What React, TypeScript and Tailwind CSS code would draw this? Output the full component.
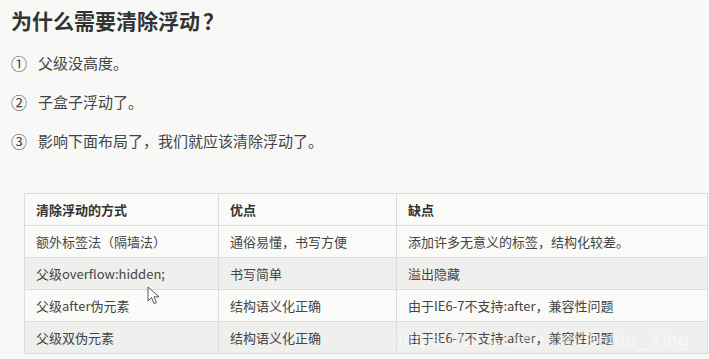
const rows = [
  ["额外标签法（隔墙法）", "通俗易懂，书写方便", "添加许多无意义的标签，结构化较差。"],
  ["父级overflow:hidden;", "书写简单", "溢出隐藏"],
  ["父级after伪元素", "结构语义化正确", "由于IE6-7不支持:after，兼容性问题"],
  ["父级双伪元素", "结构语义化正确", "由于IE6-7不支持:after，兼容性问题"],
];

const items = ["父级没高度。", "子盒子浮动了。", "影响下面布局了，我们就应该清除浮动了。"];
const marks = ["①", "②", "③"];

export default function App() {
  return (
    <div
      className="relative w-[709px] h-[359px] overflow-hidden bg-[#f8f9f6] text-[#3a3a3a]"
      style={{ fontFamily: '"Noto Sans CJK SC", "Noto Sans", sans-serif' }}
    >
      <h1 className="pl-[11px] pt-[6px] text-[21px] leading-[28px] font-bold text-[#333]">
        为什么需要清除浮动<span className="ml-[3px]">？</span>
      </h1>

      <ul className="mt-[18px] pl-[11px] flex flex-col gap-[17px]">
        {items.map((t, i) => (
          <li key={i} className="flex items-center h-[22px] text-[15px] leading-[22px] text-[#444]">
            <span className="w-[27px] text-[16px]">{marks[i]}</span>
            <span>{t}</span>
          </li>
        ))}
      </ul>

      {/* Table */}
      <table className="mt-[41px] ml-[24px] w-[684px] border-collapse text-[13px] text-[#444]">
        <thead>
          <tr className="h-[32px] bg-[#fafbf8]">
            <th className="w-[194px] border border-[#dcdcdc] px-[11px] text-left font-bold text-[#333]">清除浮动的方式</th>
            <th className="w-[178px] border border-[#dcdcdc] px-[11px] text-left font-bold text-[#333]">优点</th>
            <th className="border border-[#dcdcdc] px-[11px] text-left font-bold text-[#333]">缺点</th>
          </tr>
        </thead>
        <tbody>
          {rows.map((r, i) => (
            <tr key={i} className={`h-[32px] ${i % 2 === 1 ? "bg-[#efefee]" : "bg-[#fafbf8]"}`}>
              {r.map((c, j) => (
                <td key={j} className="border border-[#dcdcdc] px-[11px]">{c}</td>
              ))}
            </tr>
          ))}
        </tbody>
      </table>

      {/* watermark */}
      <div
        className="absolute left-[398px] top-[326px] text-[19px] tracking-[0.5px] text-white/50 whitespace-nowrap pointer-events-none"
        style={{ fontFamily: '"Liberation Sans", sans-serif' }}
      >
        https://blog.csdn.net/Better_Xing
      </div>

      {/* mouse cursor */}
      <svg className="absolute left-[147px] top-[286px]" width="14" height="20" viewBox="0 0 14 20">
        <path d="M1 1 L1 15 L4.5 11.5 L7 17.5 L9.5 16.5 L7 10.8 L12 10.8 Z" fill="#fff" stroke="#555" strokeWidth="1" />
      </svg>
    </div>
  );
}
